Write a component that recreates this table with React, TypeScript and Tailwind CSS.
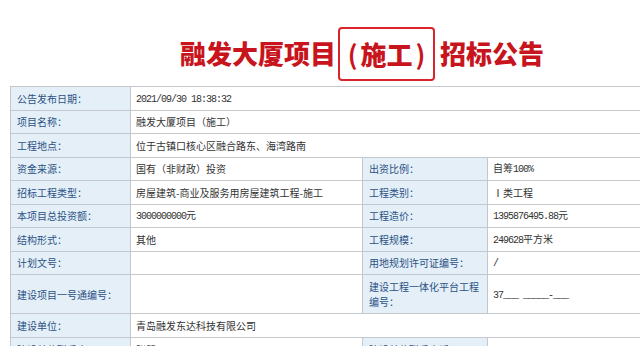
import React from 'react';

type Cell = { label: string; value?: React.ReactNode };
interface Row {
  left: Cell;
  right?: Cell;
  h: string;
}

const mono = (s: string) => (
  <span className="font-['Liberation_Mono',monospace] tracking-[-1px]">{s}</span>
);

const rows: Row[] = [
  { left: { label: '公告发布日期：', value: mono('2021/09/30 18:38:32') }, h: 'h-[23.5px]' },
  { left: { label: '项目名称：', value: '融发大厦项目（施工）' }, h: 'h-[23.5px]' },
  { left: { label: '工程地点：', value: '位于古镇口核心区融合路东、海湾路南' }, h: 'h-[23.5px]' },
  {
    left: { label: '资金来源：', value: '国有（非财政）投资' },
    right: { label: '出资比例：', value: <>自筹{mono('100%')}</> },
    h: 'h-[23.5px]',
  },
  {
    left: { label: '招标工程类型：', value: '房屋建筑-商业及服务用房屋建筑工程-施工' },
    right: { label: '工程类别：', value: 'Ⅰ类工程' },
    h: 'h-[23.5px]',
  },
  {
    left: { label: '本项目总投资额：', value: <>{mono('3000000000')}元</> },
    right: { label: '工程造价：', value: <>{mono('1395876495.88')}元</> },
    h: 'h-[23.5px]',
  },
  {
    left: { label: '结构形式：', value: '其他' },
    right: { label: '工程规模：', value: <>{mono('249628')}平方米</> },
    h: 'h-[23.5px]',
  },
  {
    left: { label: '计划文号：', value: '' },
    right: { label: '用地规划许可证编号：', value: mono('/') },
    h: 'h-[23.5px]',
  },
  {
    left: { label: '建设项目一号通编号：', value: '' },
    right: { label: '建设工程一体化平台工程编号：', value: mono('37___ _____-___') },
    h: 'h-[39px]',
  },
  { left: { label: '建设单位：', value: '青岛融发东达科技有限公司' }, h: 'h-[24px]' },
  {
    left: { label: '建设单位联系人：', value: '张慧' },
    right: { label: '建设单位联系电话：', value: mono('0532-86166855') },
    h: 'h-[24px]',
  },
];

const labelCls =
  'border border-[#c4c8cc] bg-[#e5eff8] pl-[6px] pr-[8px] text-left align-middle text-[#2a5285] leading-[15px] font-normal';
const valueCls = 'border border-[#c4c8cc] bg-white pl-[5px] pr-[4px] text-left align-middle text-[#333] leading-[15px]';

export default function App() {
  return (
    <div className="w-[640px] h-[346px] overflow-hidden bg-white font-['Noto_Sans_CJK_SC',sans-serif]">
      <div className="h-[86px] flex items-start pl-[180px] pt-[27px] text-[26px] font-black text-[#c8141c] leading-none">
        <span className="mt-[13px] tracking-[0px]">融发大厦项目</span>
        <span className="ml-[2px] h-[54px] w-[97px] flex items-center justify-center border-2 border-[#d8242a] rounded-[4px]">
          <span className="font-bold">(</span>
          <span className="mx-[3px]">施工</span>
          <span className="font-bold">)</span>
        </span>
        <span className="ml-[5px] mt-[13px]">招标公告</span>
      </div>
      <div className="pl-[10px]">
        <table className="table-fixed border-collapse w-[700px] text-[10px]">
          <colgroup>
            <col className="w-[120px]" />
            <col className="w-[232px]" />
            <col className="w-[125px]" />
            <col className="w-[223px]" />
          </colgroup>
          <tbody>
            {rows.map((r, i) => (
              <tr key={i} className={r.h}>
                <th className={labelCls}>{r.left.label}</th>
                {r.right ? (
                  <>
                    <td className={valueCls}>{r.left.value}</td>
                    <th className={labelCls}>{r.right.label}</th>
                    <td className={valueCls}>{r.right.value}</td>
                  </>
                ) : (
                  <td className={valueCls} colSpan={3}>
                    {r.left.value}
                  </td>
                )}
              </tr>
            ))}
          </tbody>
        </table>
      </div>
    </div>
  );
}
